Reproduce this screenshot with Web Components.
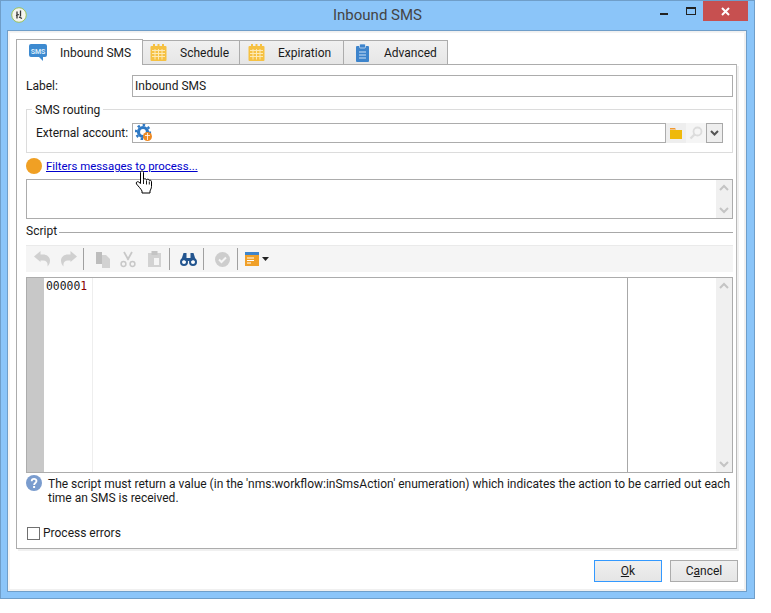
<!DOCTYPE html>
<html><head><meta charset="utf-8">
<style>
html,body{margin:0;padding:0;background:#fff;}
body{font:12px/16px Roboto,"Liberation Sans",sans-serif;color:#1a1a1a;width:771px;height:613px;overflow:hidden;}
</style></head><body>
<template id="t-window"><style>
:host{display:flex;flex-direction:column;box-sizing:border-box;width:755px;height:599px;background:#8bc5f9;border:1px solid #6f9ec9;}
.bar{display:flex;align-items:flex-start;height:29px;flex:none;position:relative;}
.ic{margin:5px 0 0 9px;flex:none;}
.title{position:absolute;left:0;right:0;top:3px;text-align:center;font-size:15px;line-height:22px;color:#444;}
.ctl{margin-left:auto;display:flex;align-items:flex-start;margin-right:6px;position:relative;}
.min{width:8px;height:2px;background:#222;margin:12px 18px 0 0;}
.max{width:8px;height:5px;border:1px solid #222;border-top-width:2px;}
.maxw{margin:6px 7px 0 0}
.close{width:45px;height:20px;background:#c75050;display:flex;align-items:center;justify-content:center;}
.client{flex:1;margin:0 7px 6px 6px;border:1px solid #6f9ec9;background:#fff;box-sizing:border-box;display:flex;flex-direction:column;min-height:0;box-shadow:inset 0 1px 0 #f0f0f0,inset 0 2px 0 #f4f4f4,inset -2px 0 0 #f0f0f0,inset 0 -2px 0 #f0f0f0,inset 2px 0 0 #f4f4f4;}
</style>
<div class="bar"><svg class="ic" width="18" height="18" viewBox="0 0 18 18"><circle cx="9" cy="9" r="7.300" fill="#f4f4ee" stroke="#9cc25a"/><path d="M7 5.500v7M10.500 4.500v6M6 9.500l3-1M9 11l3 1.500" stroke="#333" stroke-width="1.300" fill="none"/></svg>
<div class="title"><slot name="title"></slot></div>
<div class="ctl"><div class="min"></div><div class="maxw"><div class="max"></div></div><div class="close"><svg width="9" height="9" viewBox="0 0 9 9"><path d="M1 1l7 7M8 1l-7 7" stroke="#fff" stroke-width="2"/></svg></div></div></div>
<div class="client"><slot></slot></div>
</template>

<template id="t-tabs"><style>
:host{display:flex;align-items:flex-end;height:26px;margin:7px 0 0 8px;flex:none;}
</style><slot></slot></template>

<template id="t-tab"><style>
:host{display:flex;align-items:center;box-sizing:border-box;height:24px;background:linear-gradient(#f0f0f0,#e6e6e6);border:1px solid #acacac;border-bottom:0;border-left-width:0;position:relative;white-space:nowrap;}
:host([active]){height:26px;background:#fff;border-left-width:1px;margin-bottom:-1px;z-index:2;}
.i{display:flex;justify-content:center;flex:none;}
</style><span class="i"><slot name="icon"></slot></span><slot></slot></template>

<template id="t-panel"><style>
:host{display:flex;flex-direction:column;box-sizing:border-box;width:721px;height:485px;margin-left:8px;border:1px solid #acacac;border-right-color:#b8b8b8;padding:0 3px 0 9px;flex:none;background:#fff;box-shadow:2px 2px 0 #f0f0f0;}
</style><slot></slot></template>

<template id="t-row"><style>
:host{display:flex;align-items:center;flex:none;}
.l{flex:none;white-space:nowrap;padding-bottom:1px;}
.b{flex:1;box-sizing:border-box;height:var(--h,22px);border:1px solid #acacac;display:flex;align-items:center;padding:0 0 1px 2px;min-width:0;}
</style><span class="l"><slot name="label"></slot></span><div class="b"><slot></slot></div><slot name="after"></slot></template>

<template id="t-group"><style>
:host{display:block;box-sizing:border-box;width:707px;height:44px;border:1px solid #dcdcdc;margin-top:12px;position:relative;flex:none;padding:13px 9px 0;}
.lg{position:absolute;left:5px;top:-8px;background:#fff;padding:0 3px;line-height:16px;}
</style><div class="lg"><slot name="legend"></slot></div><slot></slot></template>

<template id="t-filter"><style>
:host{display:flex;align-items:center;height:16px;margin-top:5px;flex:none;position:relative;}
.dot{width:16px;height:16px;border-radius:50%;background:#f0a024;margin-right:4px;flex:none;}
a{color:#00c;text-decoration:underline;font-size:11.400px;}
svg{position:absolute;left:109px;top:12px;}
</style><span class="dot"></span><a><slot></slot></a>
<svg width="18" height="24" viewBox="0 0 18 24"><path d="M5.500 2.500c0-2 3-2 3 0v7c.8-1 2.500-1 3 .3 1-1 2.500-.7 2.800.6 1-.6 2.200 0 2.200 1.400v4.700c0 2-1 3-1.500 4.500v2H7v-2c-1-2-3.500-4.500-5.500-7-1-1.500.8-3 2.200-2l1.800 1.500z" fill="#fff" stroke="#000" stroke-width="1"/><path d="M8.500 10v4M11.500 10.500v4M14.300 11.500v3" stroke="#000" stroke-width=".9"/></svg>
</template>

<template id="t-scroll"><style>
:host{display:flex;flex-direction:column;justify-content:space-between;align-items:center;width:16px;background:#f0f0f0;box-sizing:border-box;padding:4px 0;flex:none;align-self:stretch;}
</style><svg width="10" height="7" viewBox="0 0 10 7"><path d="M1 6l4-4 4 4" fill="none" stroke="#c4c4c4" stroke-width="2"/></svg><svg width="10" height="7" viewBox="0 0 10 7"><path d="M1 1l4 4 4-4" fill="none" stroke="#c4c4c4" stroke-width="2"/></svg></template>

<template id="t-textbox"><style>
:host{display:flex;justify-content:flex-end;box-sizing:border-box;width:707px;height:40px;border:1px solid #acacac;margin-top:5px;flex:none;}
</style><x-scroll></x-scroll></template>

<template id="t-sep"><style>
:host{display:flex;align-items:center;height:16px;margin-top:4px;flex:none;}
i{flex:1;height:1px;background:#a8a8a8;margin:2px 0 0 2px;}
</style><slot></slot><i></i></template>

<template id="t-toolbar"><style>
:host{display:flex;align-items:center;box-sizing:border-box;width:707px;height:27px;background:#f5f5f5;margin-top:6px;flex:none;padding-left:7px;border-top:1px solid #eaeaea;}
</style><slot></slot></template>

<template id="t-tsep"><style>:host{display:block;width:1px;height:22px;background:#a0a0a0;flex:none;}</style></template>

<template id="t-editor"><style>
:host{display:flex;box-sizing:border-box;width:707px;height:196px;border:1px solid #acacac;margin-top:5px;flex:none;}
.g{width:17px;background:#c8c8c8;flex:none;}
.n{width:49px;box-sizing:border-box;border-right:1px solid #eee;padding:0 0 0 2px;font:11.400px/16px "DejaVu Sans Mono",monospace;flex:none;color:#1a1a1a;}
.m{flex:1;border-right:1px solid #a8a8a8;}
.r{width:104px;flex:none;display:flex;justify-content:flex-end;}
</style><div class="g"></div><div class="n"><slot></slot></div><div class="m"></div><div class="r"><x-scroll></x-scroll></div></template>

<template id="t-help"><style>
:host{display:flex;margin-top:2px;flex:none;width:707px;line-height:14px;}
.t{margin-left:6px;padding-top:2px;}
svg{flex:none}
</style><svg width="16" height="16" viewBox="0 0 16 16"><circle cx="8" cy="8" r="8" fill="#7a9cce"/><path d="M5.700 6.200c0-3 4.800-3 4.800-.1 0 1.900-2.400 1.900-2.400 3.800" fill="none" stroke="#fff" stroke-width="1.800"/><rect x="7.100" y="11" width="2" height="2" fill="#fff"/></svg><div class="t"><slot></slot></div></template>

<template id="t-check"><style>
:host{display:flex;align-items:center;margin:20px 0 0 1px;flex:none;height:16px;}
i{width:11px;height:11px;border:1px solid #707070;background:#fff;margin-right:3px;flex:none;}
</style><i></i><slot></slot></template>

<template id="t-foot"><style>
:host{display:flex;justify-content:flex-end;gap:8px;margin:11px 8px 0 0;flex:none;}
</style><slot></slot></template>

<template id="t-btn"><style>
:host{display:flex;align-items:center;justify-content:center;box-sizing:border-box;width:68px;height:22px;border:1px solid #acacac;background:linear-gradient(#f0f0f0,#e5e5e5);}
:host([focus]){border-color:#3399ff;}
</style><slot></slot></template>

<template id="t-icon"><style>:host{display:flex;flex:none;align-items:center;justify-content:center}</style><slot></slot></template>

<x-window>
 <span slot="title">Inbound SMS</span>
 <x-tabs>
  <x-tab active style="width:127px"><svg slot="icon" style="margin:0 13px 0 12px" width="18" height="19" viewBox="0 0 18 19"><path d="M2 1h14a2 2 0 0 1 2 2v9a2 2 0 0 1-2 2h-2v4l-4-4H2a2 2 0 0 1-2-2V3a2 2 0 0 1 2-2z" fill="#3d8ad0"/><text x="9" y="10.500" font-size="7" font-weight="700" text-anchor="middle" fill="#d8ebfa" font-family="Roboto">SMS</text></svg>Inbound SMS</x-tab>
  <x-tab style="width:97px"><svg slot="icon" style="margin:0 13px 0 7px" width="17" height="18" viewBox="0 0 17 18"><rect x=".5" y="2" width="16" height="15" rx="1" fill="#f6c142"/><path d="M4 0v4M8.500 0v4M13 0v4" stroke="#f6c142" stroke-width="2"/><path d="M2 6.500h13M2 9.500h13M2 12.500h13M5 5v10.500M8.500 5v10.500M12 5v10.500" stroke="#fde9b4"/></svg>Schedule</x-tab>
  <x-tab style="width:104px"><svg slot="icon" style="margin:0 13px 0 8px" width="17" height="18" viewBox="0 0 17 18"><rect x=".5" y="2" width="16" height="15" rx="1" fill="#f6c142"/><path d="M4 0v4M8.500 0v4M13 0v4" stroke="#f6c142" stroke-width="2"/><path d="M2 6.500h13M2 9.500h13M2 12.500h13M5 5v10.500M8.500 5v10.500M12 5v10.500" stroke="#fde9b4"/></svg>Expiration</x-tab>
  <x-tab style="width:104px"><svg slot="icon" style="margin:0 15px 0 12px" width="13" height="18" viewBox="0 0 13 18"><rect y="2" width="13" height="16" rx="1" fill="#3d84cc"/><rect x="3.500" y="0" width="6" height="4" rx="1" fill="#3d84cc" stroke="#fff" stroke-width=".6"/><path d="M3 8h7M3 11h7M3 14h7" stroke="#cfe2f5" stroke-width="1.100"/></svg>Advanced</x-tab>
 </x-tabs>
 <x-panel>
  <x-row style="margin-top:10px;width:707px"><span slot="label" style="display:block;width:106px">Label:</span>Inbound SMS</x-row>
  <x-group><span slot="legend">SMS routing</span>
   <x-row style="height:20px;--h:20px"><span slot="label" style="display:block;width:96px">External account:</span>
    <svg width="18" height="18" viewBox="0 0 18 18" style="margin-bottom:-1px"><circle cx="8" cy="8" r="4.500" fill="none" stroke="#2f79c4" stroke-width="3.200"/><circle cx="8" cy="8" r="7" fill="none" stroke="#2f79c4" stroke-width="2.200" stroke-dasharray="2.500 2.900"/><circle cx="12.500" cy="12.500" r="4.500" fill="#ee8a24"/><path d="M10 11.500h5M12.500 9v7" stroke="#fff" stroke-width=".8"/></svg>
    <span slot="after" style="display:flex;height:20px;flex:none">
     <x-icon style="width:20px;background:#eee"><svg width="12" height="11" viewBox="0 0 12 11"><path d="M0 0h5l1 1.500H0z" fill="#f29a2e"/><rect y="2" width="12" height="9" fill="#efb90a"/></svg></x-icon>
     <x-icon style="width:20px;background:#f5f5f5"><svg width="14" height="14" viewBox="0 0 14 14"><circle cx="8.500" cy="5.500" r="4" fill="none" stroke="#dcdcdc" stroke-width="1.800"/><path d="M5.500 8.500L1.500 12.500" stroke="#dcdcdc" stroke-width="2.400"/></svg></x-icon>
     <x-icon style="width:17px;background:#eee;border:1px solid #a8a8a8;box-sizing:border-box"><svg width="9" height="7" viewBox="0 0 9 7"><path d="M1 1l3.500 3.500L8 1" fill="none" stroke="#555" stroke-width="2"/></svg></x-icon>
    </span>
   </x-row>
  </x-group>
  <x-filter>Filters messages to process...</x-filter>
  <x-textbox></x-textbox>
  <x-sep>Script</x-sep>
  <x-toolbar>
   <x-icon style="width:18px"><svg width="17" height="16" viewBox="0 0 17 16"><path d="M0 5.500L6.500 0v3.500H9c4.500 0 7 3 7 6 0 2.500-1 4.500-2.500 6 .5-4-1-6-4.500-6H6.500V11z" fill="#d0d0d0"/></svg></x-icon>
   <x-icon style="width:18px;margin:0 6px 0 8px"><svg width="17" height="16" viewBox="0 0 17 16"><path d="M17 5.500L10.500 0v3.500H8c-4.500 0-7 3-7 6 0 2.500 1 4.500 2.500 6-.5-4 1-6 4.500-6h2.500V11z" fill="#d0d0d0"/></svg></x-icon>
   <x-tsep></x-tsep>
   <x-icon style="width:16px;margin:0 9px 0 11px"><svg width="16" height="17" viewBox="0 0 16 17"><rect x="1" y="1" width="6" height="12" fill="#bdbdbd"/><path d="M7 4h4l4 4v9H7z" fill="#d2d2d2"/></svg></x-icon>
   <x-icon style="width:16px;margin:0 11px 0 0"><svg width="16" height="17" viewBox="0 0 16 17"><path d="M4 1l4.500 8M12 1L7.500 9" stroke="#c8c8c8" stroke-width="1.800"/><circle cx="3.500" cy="13" r="2.400" fill="none" stroke="#c8c8c8" stroke-width="1.500"/><circle cx="12.500" cy="13" r="2.400" fill="none" stroke="#c8c8c8" stroke-width="1.500"/></svg></x-icon>
   <x-icon style="width:14px;margin:0 8px 0 0"><svg width="13" height="16" viewBox="0 0 13 16"><rect y="2" width="13" height="14" fill="#d2d2d2"/><rect x="3.500" y="0" width="6" height="4" fill="#c4c4c4"/><path d="M6 7h5v7H6z" fill="#f5f5f5"/></svg></x-icon>
   <x-tsep></x-tsep>
   <x-icon style="width:17px;margin:0 6px 0 10px"><svg width="17" height="14" viewBox="0 0 17 14"><circle cx="4" cy="10" r="3" fill="#fff" stroke="#23558f" stroke-width="2"/><circle cx="13" cy="10" r="3" fill="#fff" stroke="#23558f" stroke-width="2"/><path d="M1 9l2.500-8h3v5h4V1h3L16 9l-3-1-2 1H6L4 8z" fill="#23558f"/></svg></x-icon>
   <x-tsep></x-tsep>
   <x-icon style="width:15px;margin:0 7px 0 11px"><svg width="15" height="15" viewBox="0 0 15 15"><circle cx="7.500" cy="7.500" r="7.500" fill="#cdcdcd"/><path d="M4 7.500l2.500 2.500 4.500-4.500" fill="none" stroke="#f5f5f5" stroke-width="2"/></svg></x-icon>
   <x-tsep></x-tsep>
   <x-icon style="width:14px;margin-left:7px"><svg width="14" height="14" viewBox="0 0 14 14"><rect width="14" height="3" fill="#3d84cc"/><rect y="3" width="14" height="11" fill="#f0a028"/><path d="M2 6h7M2 8.500h7M2 11h4" stroke="#fff"/></svg></x-icon>
   <x-icon style="margin-left:3px"><svg width="7" height="4" viewBox="0 0 7 4"><path d="M0 0h7L3.500 4z" fill="#222"/></svg></x-icon>
  </x-toolbar>
  <x-editor>00000<span style="color:#800">1</span></x-editor>
  <x-help>The script must return a value (in the 'nms:workflow:inSmsAction' enumeration) which indicates the action to be carried out each time an SMS is received.</x-help>
  <x-check>Process errors</x-check>
 </x-panel>
 <x-foot><x-btn focus><span><u>O</u>k</span></x-btn><x-btn><span>C<u>a</u>ncel</span></x-btn></x-foot>
</x-window>
<script>
const reg=(n,t)=>customElements.define(n,class extends HTMLElement{constructor(){super();this.attachShadow({mode:'open'}).appendChild(document.getElementById(t).content.cloneNode(true));}});
[['x-scroll','t-scroll'],['x-window','t-window'],['x-tabs','t-tabs'],['x-tab','t-tab'],['x-panel','t-panel'],['x-row','t-row'],['x-group','t-group'],['x-filter','t-filter'],['x-textbox','t-textbox'],['x-sep','t-sep'],['x-toolbar','t-toolbar'],['x-tsep','t-tsep'],['x-editor','t-editor'],['x-help','t-help'],['x-check','t-check'],['x-foot','t-foot'],['x-btn','t-btn'],['x-icon','t-icon']].forEach(a=>reg(a[0],a[1]));
</script>
</body></html>
